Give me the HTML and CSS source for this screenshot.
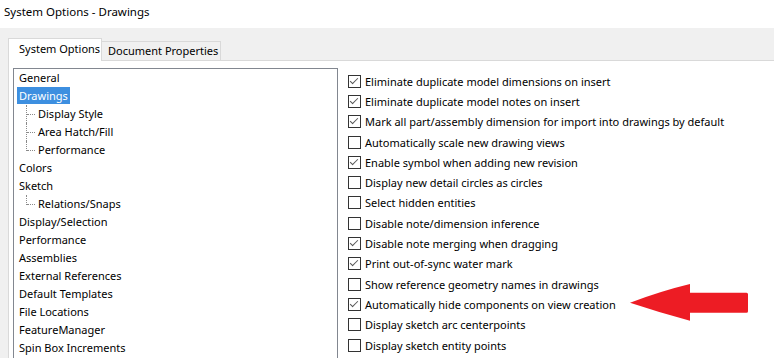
FILE: index.html
```html
<!DOCTYPE html>
<html lang="en">

<head>
    <meta charset="UTF-8">
    <meta name="viewport" content="width=device-width, initial-scale=1.0">
    <title>System Options - Drawings</title>
    <link rel="stylesheet" href="styles.css">
</head>

<body>
    <div class="titlebar">System Options - Drawings</div>
    <div class="dialog">
        <div class="tabs">
            <div class="tab active">System Options</div>
            <div class="tab">Document Properties</div>
        </div>
        <div class="panel">
            <ul class="tree">
                <li>General</li>
                <li><span class="selected">Drawings</span></li>
                <li class="child">Display Style</li>
                <li class="child">Area Hatch/Fill</li>
                <li class="child last">Performance</li>
                <li>Colors</li>
                <li>Sketch</li>
                <li class="child last">Relations/Snaps</li>
                <li>Display/Selection</li>
                <li>Performance</li>
                <li>Assemblies</li>
                <li>External References</li>
                <li>Default Templates</li>
                <li>File Locations</li>
                <li>FeatureManager</li>
                <li>Spin Box Increments</li>
            </ul>
            <div class="options">
                <label class="option"><span class="box checked"></span>Eliminate duplicate model dimensions on insert</label>
                <label class="option"><span class="box checked"></span>Eliminate duplicate model notes on insert</label>
                <label class="option"><span class="box checked"></span>Mark all part/assembly dimension for import into drawings by default</label>
                <label class="option"><span class="box"></span>Automatically scale new drawing views</label>
                <label class="option"><span class="box checked"></span>Enable symbol when adding new revision</label>
                <label class="option"><span class="box"></span>Display new detail circles as circles</label>
                <label class="option"><span class="box"></span>Select hidden entities</label>
                <label class="option"><span class="box"></span>Disable note/dimension inference</label>
                <label class="option"><span class="box checked"></span>Disable note merging when dragging</label>
                <label class="option"><span class="box checked"></span>Print out-of-sync water mark</label>
                <label class="option"><span class="box"></span>Show reference geometry names in drawings</label>
                <label class="option"><span class="box checked"></span>Automatically hide components on view creation</label>
                <label class="option"><span class="box"></span>Display sketch arc centerpoints</label>
                <label class="option"><span class="box"></span>Display sketch entity points</label>
            </div>
        </div>
    </div>
    <!-- annotation arrow pasted over the dialog -->
    <svg class="arrow" width="124" height="42" viewBox="0 0 124 42">
        <path d="M2 20.7 Q33 9 62 2 L62 10.7 L118.5 10.7 Q120 10.7 120 12.2 L120 29.2 Q120 30.7 118.5 30.7 L62 30.7 L62 38.7 Q33 31 2 20.7 Z" fill="#ed1c24"/>
    </svg>
</body>

</html>
```
FILE: styles.css
```css
body {
    margin: 0;
    background-color: #f0f0f0;
    color: #000;
    font-family: "Noto Sans", sans-serif;
    font-size: 11px;
    overflow: hidden;
    height: 358px;
    position: relative;
}

.titlebar {
    background-color: #fff;
    height: 28px;
    line-height: 24px;
    padding-left: 4px;
    font-size: 11.5px;
}

.dialog {
    padding-top: 10px;
}

.tabs {
    display: flex;
    align-items: flex-end;
    margin-left: 8px;
    height: 22px;
    border-bottom: 1px solid #d9d9d9;
}

.tab {
    height: 18px;
    line-height: 17px;
    padding: 0 2px 0 6px;
    border: 1px solid #d9d9d9;
    border-bottom: none;
    border-left: none;
    background-color: #f0f0f0;
}

.tab.active {
    height: 22px;
    line-height: 20px;
    width: 82px;
    padding: 0 0 0 10px;
    border-left: 1px solid #d9d9d9;
    background-color: #fff;
    margin-bottom: -1px;
    position: relative;
}

.panel {
    display: flex;
    align-items: flex-start;
    gap: 10px;
    margin-left: 8px;
    padding: 7px 0 0 4px;
    background-color: #fff;
    border-left: 1px solid #d9d9d9;
    height: 290px;
}

.tree {
    list-style: none;
    margin: 0;
    padding: 0;
    width: 323px;
    height: 289px;
    border: 1px solid #828790;
    border-bottom: none;
    flex-shrink: 0;
}

.tree li {
    height: 18px;
    line-height: 18px;
    padding-left: 5px;
    white-space: nowrap;
    position: relative;
}

.tree .selected {
    display: inline-block;
    margin-left: -2px;
    padding: 0 2px;
    height: 17px;
    line-height: 17px;
    background-color: #3d8fe0;
    color: #fff;
}

.tree .child {
    padding-left: 24px;
}

/* dotted tree connectors */
.tree .child::before {
    content: "";
    position: absolute;
    left: 13px;
    top: 9px;
    width: 8px;
    border-top: 1px dotted #8a8a8a;
}

.tree .child::after {
    content: "";
    position: absolute;
    left: 12px;
    top: 0;
    height: 18px;
    border-left: 1px dotted #8a8a8a;
}

.tree .child.last::after {
    height: 10px;
}

.options {
    display: grid;
    grid-auto-rows: 20.3px;
    padding-top: 3px;
}

.option {
    display: flex;
    align-items: center;
    white-space: nowrap;
}

.box {
    width: 11px;
    height: 11px;
    border: 1px solid #333;
    margin-right: 4px;
    background-color: #fff;
    position: relative;
}

.box.checked::after {
    content: "";
    position: absolute;
    left: 3px;
    top: 0;
    width: 3px;
    height: 7px;
    border-right: 1px solid #555;
    border-bottom: 1px solid #555;
    transform: rotate(45deg);
}

.arrow {
    position: absolute;
    left: 628px;
    top: 282px;
}
```
